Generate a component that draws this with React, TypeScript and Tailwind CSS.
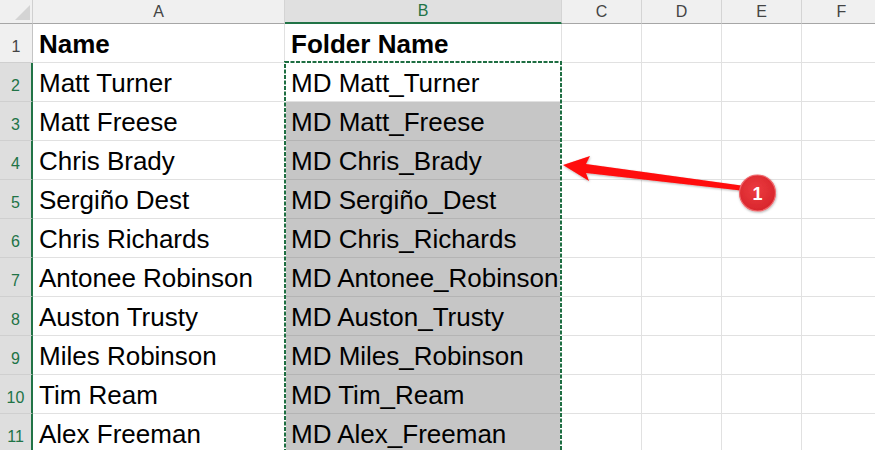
import React from "react";

const COLS = ["A", "B", "C", "D", "E", "F"];
const WIDTHS = [252, 277, 80, 80, 80, 80];

const rows: [string, string][] = [
  ["Matt Turner", "MD Matt_Turner"],
  ["Matt Freese", "MD Matt_Freese"],
  ["Chris Brady", "MD Chris_Brady"],
  ["Sergiño Dest", "MD Sergiño_Dest"],
  ["Chris Richards", "MD Chris_Richards"],
  ["Antonee Robinson", "MD Antonee_Robinson"],
  ["Auston Trusty", "MD Auston_Trusty"],
  ["Miles Robinson", "MD Miles_Robinson"],
  ["Tim Ream", "MD Tim_Ream"],
  ["Alex Freeman", "MD Alex_Freeman"],
];

function Cell({ text, bold, fill, w }: { text?: string; bold?: boolean; fill?: boolean; w: number }) {
  return (
    <div
      style={{ width: w }}
      className={`h-[39px] shrink-0 box-border border-r border-b flex items-end pl-[6px] pb-[5px] overflow-visible whitespace-nowrap text-[26px] leading-none text-black ${
        fill ? "bg-[#c6c6c6] border-[#b4b4b4]" : "bg-white border-[#e1e1e1]"
      } ${bold ? "font-bold" : ""}`}
    >
      {text}
    </div>
  );
}

function RowHeader({ n, sel }: { n: number; sel: boolean }) {
  return (
    <div
      className={`w-[33px] h-[39px] shrink-0 box-border border-b border-[#cfcfcf] flex items-end justify-center pb-[7px] text-[16px] leading-none ${
        sel
          ? "bg-[#dedede] text-[#217346] border-r-2 border-r-[#217346]"
          : "bg-[#f0f0f0] text-[#444] border-r border-r-[#c4c4c4]"
      }`}
    >
      {n}
    </div>
  );
}

export default function App() {
  return (
    <div className="relative w-[875px] h-[450px] overflow-hidden bg-white font-['Liberation_Sans',Arial,sans-serif]">
      {/* column headers */}
      <div className="flex h-[24px]">
        <div className="relative w-[33px] h-[24px] shrink-0 box-border bg-[#f0f0f0] border-r border-b border-r-[#d0d0d0] border-b-[#a6a6a6]">
          <svg className="absolute left-0 top-0" width="33" height="24">
            <polygon points="15,20 30,20 30,5" fill="#d4d4d4" />
          </svg>
        </div>
        {COLS.map((c, i) => (
          <div
            key={c}
            style={{ width: WIDTHS[i] }}
            className={`h-[24px] shrink-0 box-border border-r border-r-[#d4d4d4] flex items-center justify-center text-[16px] leading-none ${
              c === "B"
                ? "bg-[#e0e0e0] text-[#217346] border-b-2 border-b-[#217346]"
                : "bg-[#f0f0f0] text-[#444] border-b border-b-[#a6a6a6]"
            }`}
          >
            {c}
          </div>
        ))}
      </div>

      {/* row 1 */}
      <div className="flex">
        <RowHeader n={1} sel={false} />
        <Cell w={WIDTHS[0]} text="Name" bold />
        <Cell w={WIDTHS[1]} text="Folder Name" bold />
        {WIDTHS.slice(2).map((w, i) => (
          <Cell key={i} w={w} />
        ))}
      </div>

      {rows.map(([a, b], idx) => (
        <div className="flex" key={idx}>
          <RowHeader n={idx + 2} sel />
          <Cell w={WIDTHS[0]} text={a} />
          <Cell w={WIDTHS[1]} text={b} fill={idx > 0} />
          {WIDTHS.slice(2).map((w, i) => (
            <Cell key={i} w={w} />
          ))}
        </div>
      ))}

      {/* copy marquee */}
      <svg className="absolute left-0 top-0 pointer-events-none" width="875" height="450">
        <rect x="285" y="62" width="276" height="420" fill="none" stroke="#ffffff" strokeWidth="2" />
        <rect x="285" y="62" width="276" height="420" fill="none" stroke="#1e6e42" strokeWidth="2" strokeDasharray="4 1.5" />
      </svg>

      {/* arrow + badge */}
      <svg className="absolute left-0 top-0 pointer-events-none" width="875" height="450">
        <defs>
          <filter id="sh" x="-20%" y="-20%" width="140%" height="140%">
            <feDropShadow dx="0.5" dy="1" stdDeviation="1" floodColor="#000" floodOpacity="0.3" />
          </filter>
          <radialGradient id="bg" cx="45%" cy="40%" r="60%">
            <stop offset="0%" stopColor="#ec3b40" />
            <stop offset="100%" stopColor="#d8262c" />
          </radialGradient>
        </defs>
        <polygon
          points="563,165 590,156 586,164 745,186 745,191 586,173 589,181"
          fill="#ff0a0a"
          filter="url(#sh)"
        />
        <circle cx="757.5" cy="193" r="18" fill="url(#bg)" stroke="#f06a6e" strokeWidth="1.2" filter="url(#sh)" />
        <text
          x="757.5"
          y="199.5"
          textAnchor="middle"
          fontSize="18"
          fontWeight="bold"
          fill="#ffffff"
          fontFamily="Liberation Sans, Arial, sans-serif"
        >
          1
        </text>
      </svg>
    </div>
  );
}
